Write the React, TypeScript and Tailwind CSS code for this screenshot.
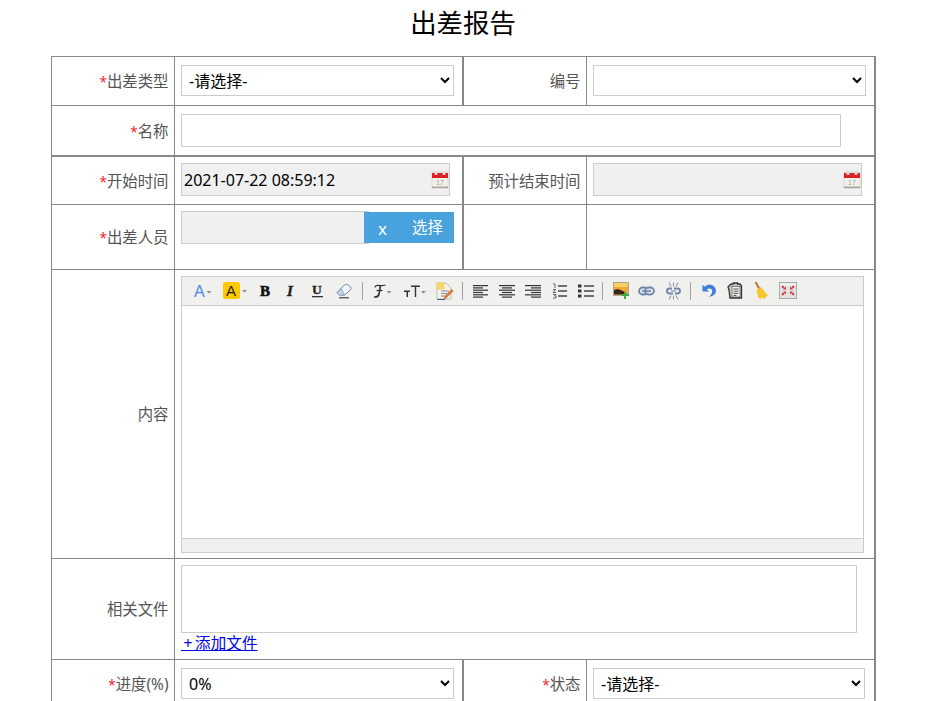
import React from 'react';

const font = { fontFamily: '"Noto Sans","Noto Sans CJK SC",sans-serif' };

const Label = ({ text, star, thick }: { text: string; star?: boolean; thick?: boolean }) => (
  <td className={`border ${thick ? 'border-t-2' : ''} border-[#888] pr-[5.5px] pt-[2px] text-right align-middle text-[15.4px] text-[#555]`}>
    {star && <span className="text-[13.5px] text-[#f5222d]">*</span>}
    {text}
  </td>
);

const Calendar = () => (
  <svg width="18" height="19" viewBox="0 0 18 19" className="shrink-0">
    <rect x="1" y="2" width="16" height="16" fill="#f4f1ea" stroke="#cfcabf" strokeWidth="0.6" />
    <rect x="1" y="3" width="16" height="5" fill="#dd1f26" />
    <rect x="3.5" y="1" width="3" height="4" rx="1" fill="#d9d9d9" />
    <rect x="11.5" y="1" width="3" height="4" rx="1" fill="#d9d9d9" />
    <rect x="1" y="16.5" width="16" height="1.6" fill="#a8a59c" />
    <text x="5" y="15" fontSize="7" fill="#9a9a9a" fontFamily="Liberation Sans">17</text>
  </svg>
);

const DateBox = ({ value }: { value?: string }) => (
  <div className="flex h-[33px] w-[269px] items-center justify-between border border-[#ccc] bg-[#f0f0f0] pl-[2px] text-[16px] text-black">
    <span className="pt-[2px]">{value}</span>
    <span className="flex"><Calendar /></span>
  </div>
);

const Select = ({ value, width }: { value: string; width: string }) => (
  <select
    defaultValue={value}
    className={`${width} block h-[31px] border border-[#ccc] bg-white pl-[3px] pt-[2px] text-[16px] text-black`}
  >
    <option value={value}>{value}</option>
  </select>
);

const Sep = ({ cls }: { cls: string }) => <div className={`${cls} h-[18px] w-px shrink-0 bg-[#a0a0a0]`} />;

const Caret = ({ x, y = 9 }: { x: number; y?: number }) => (
  <path d={`M${x} ${y}h5l-2.5 2.5z`} fill="#8a8a8a" />
);

const Lines = ({ rows }: { rows: [number, number][] }) => (
  <>
    {rows.map(([x, w], i) => (
      <rect key={i} x={x} y={1 + i * 2.3} width={w} height="1.2" fill="#333" />
    ))}
  </>
);

const Toolbar = () => (
  <div className="flex h-[29px] shrink-0 items-center border-b border-[#ccc] bg-[#f0f0ee]">
    <svg width="18" height="16" viewBox="0 0 18 16" className="ml-[12px] shrink-0">
      <text x="0" y="14" fontSize="16" fill="#4a86e8" fontFamily="Liberation Sans">A</text>
      <Caret x={12.5} y={8} />
    </svg>
    <svg width="24" height="17" viewBox="0 0 24 17" className="ml-[11px] shrink-0">
      <rect width="17" height="17" rx="2.5" fill="#ffc800" />
      <text x="3" y="14" fontSize="15" fill="#222" fontFamily="Liberation Sans">A</text>
      <Caret x={19} y={8} />
    </svg>
    <svg width="12" height="14" viewBox="0 0 12 14" className="ml-[12px] shrink-0">
      <text x="1" y="12" fontSize="15" fontWeight="700" fill="#111" stroke="#111" strokeWidth="0.6" fontFamily="Liberation Serif">B</text>
    </svg>
    <svg width="10" height="14" viewBox="0 0 10 14" className="ml-[15px] shrink-0">
      <text x="1" y="12" fontSize="15" fontWeight="700" fontStyle="italic" fill="#222" stroke="#222" strokeWidth="0.4" fontFamily="Liberation Serif">I</text>
    </svg>
    <svg width="11" height="15" viewBox="0 0 11 15" className="ml-[16px] shrink-0">
      <text x="0" y="11" fontSize="13.500" fontWeight="700" fill="#222" stroke="#222" strokeWidth="0.3" fontFamily="Liberation Serif">U</text>
      <rect y="13" width="11" height="1.3" fill="#333" />
    </svg>
    <svg width="16" height="16" viewBox="0 0 16 16" className="ml-[13px] shrink-0">
      <path d="M1 9.500 8.500 2q1.800-1.500 3.500 0l2.500 2q1.200 1.500 0 2.800L8.500 12H3.500z" fill="#f2f5f9" stroke="#6f86a6" />
      <path d="M1 9.500 3.500 12h5L5.500 6z" fill="#c6d5e8" stroke="#6f86a6" strokeWidth="0.6" />
      <path d="M3 14.800h10" stroke="#444" strokeWidth="1.200" />
    </svg>
    <Sep cls="ml-[10px]" />
    <svg width="20" height="16" viewBox="0 0 20 16" className="ml-[9px] shrink-0">
      <path d="M3 4.500Q3 2 7 2.500q3 .6 6.500-.5" fill="none" stroke="#333" strokeWidth="1.300" />
      <path d="M8.500 2.500 7 11q-.6 3.500-5 3" fill="none" stroke="#333" strokeWidth="1.600" />
      <path d="M4.500 7.500h6" stroke="#333" strokeWidth="1.200" />
      <Caret x={14.5} y={8} />
    </svg>
    <svg width="22" height="16" viewBox="0 0 22 16" className="ml-[12px] shrink-0">
      <path d="M0 7.500h6v1.500H4v5H2.500V9H0z" fill="#333" />
      <path d="M7 2.500h9v1.400h-3.800V14h-1.400V3.900H7z" fill="#333" />
      <Caret x={17} y={8} />
    </svg>
    <svg width="18" height="18" viewBox="0 0 18 18" className="ml-[10px] shrink-0">
      <path d="M1 1h9l5 5v11H1z" fill="#f6f4ea" stroke="#a6a6a0" strokeWidth="0.7" />
      <rect x="0.500" y="0.500" width="8" height="7" fill="#f6d566" />
      <path d="M5 9h8M5 11.500h6M5 14h4" stroke="#7d8aa0" />
      <path d="M8 15 15.500 7 17.500 9 10 16.500 7.500 17z" fill="#d9773a" />
      <rect x="1" y="17" width="8" height="1" fill="#4a5a80" />
    </svg>
    <Sep cls="ml-[8px]" />
    <svg width="15" height="14" viewBox="0 0 15 14" className="ml-[10px] shrink-0">
      <Lines rows={[[0, 15], [0, 10], [0, 15], [0, 10], [0, 15], [0, 10]]} />
    </svg>
    <svg width="16" height="14" viewBox="0 0 16 14" className="ml-[11px] shrink-0">
      <Lines rows={[[0, 16], [3, 10], [0, 16], [3, 10], [0, 16], [3, 10]]} />
    </svg>
    <svg width="16" height="14" viewBox="0 0 16 14" className="ml-[10px] shrink-0">
      <Lines rows={[[0, 16], [6, 10], [0, 16], [6, 10], [0, 16], [6, 10]]} />
    </svg>
    <svg width="15" height="16" viewBox="0 0 15 16" className="ml-[11px] shrink-0">
      <path d="M1 1h2v4M1 6.500h2.500l-2.500 3h3M1 11.500h3l-1.500 1.500h1.500v2H1" fill="none" stroke="#555" strokeWidth="0.9" />
      <path d="M6 3h9M6 8h9M6 13h9" stroke="#444" strokeWidth="1.300" />
    </svg>
    <svg width="16" height="16" viewBox="0 0 16 16" className="ml-[11px] shrink-0">
      <path d="M0 1.500h3.500v3H0zM0 6.500h3.500v3H0zM0 11.500h3.500v3H0z" fill="#333" />
      <path d="M6 3h10M6 8h10M6 13h10" stroke="#444" strokeWidth="1.300" />
    </svg>
    <Sep cls="ml-[8px]" />
    <svg width="16" height="17" viewBox="0 0 16 17" className="ml-[10px] shrink-0">
      <rect x="0.300" y="0.300" width="15" height="13" fill="#f2a93c" stroke="#8b8b8b" strokeWidth="0.600" />
      <rect x="1" y="1" width="13.500" height="4" fill="#f7cf62" />
      <path d="M1 12.500V8l4-1 5 2 4.500 3.500z" fill="#33251a" />
      <path d="M11 9.500h2v2.500h3v2h-3v3h-2v-3H8.500v-2H11z" fill="#3fa84a" />
    </svg>
    <svg width="17" height="10" viewBox="0 0 17 10" className="ml-[9px] shrink-0">
      <rect x="1" y="1.500" width="9" height="7" rx="3.500" fill="#dfe6ef" stroke="#6d86a8" strokeWidth="1.800" />
      <rect x="7" y="1.500" width="9" height="7" rx="3.500" fill="#dfe6ef" stroke="#6d86a8" strokeWidth="1.800" />
      <rect x="4" y="4.200" width="9" height="1.600" fill="#6d86a8" />
    </svg>
    <svg width="17" height="18" viewBox="0 0 17 18" className="ml-[10px] shrink-0">
      <path d="M7 6.500H4.500a2.500 2.500 0 0 0 0 5H8M9 6.500h3.500a2.500 2.500 0 0 1 0 5H10" fill="none" stroke="#6d86a8" strokeWidth="1.800" />
      <path d="M6 9h5" stroke="#8da0ba" strokeWidth="1.400" />
      <path d="M4 .5l2 4M8.500 .5v4M13 .5l-2 4M4 17.500l2-4M8.500 17.500v-4M13 17.500l-2-4" stroke="#7f92ac" />
    </svg>
    <Sep cls="ml-[8px]" />
    <svg width="14" height="14" viewBox="0 0 14 14" className="ml-[11px] shrink-0">
      <path d="M.5 1v6.500h6.500L4.700 5.200Q8 3.500 9.800 5.500 11.500 8.500 7 13 14 11.500 14 6.500 13 .5 7 .5 4.500 1 3 2.800z" fill="#3f7fd6" />
    </svg>
    <svg width="16" height="17" viewBox="0 0 16 17" className="ml-[11px] shrink-0">
      <path d="M1 5 4 2h2.500V1h4v1H13l1.500 2v12H3L2 8z" fill="#c8c8c2" stroke="#333" strokeWidth="1.300" />
      <rect x="5" y="4.500" width="8" height="10.500" fill="#f1f1ec" stroke="#444" strokeWidth="0.600" />
      <path d="M6.500 7h5M6.500 9.200h5M6.500 11.400h5M6.500 13.500h3" stroke="#444" strokeWidth="0.900" />
    </svg>
    <svg width="14" height="18" viewBox="0 0 14 18" className="ml-[11px] shrink-0">
      <path d="M1.500 0 5.500 7" stroke="#b9772c" strokeWidth="2" />
      <path d="M2.500 8 7 5 8.500 7 14 13.500 9.500 17 7.500 15 6.500 17.500 4 15z" fill="#f4c62e" />
    </svg>
    <svg width="18" height="17" viewBox="0 0 18 17" className="ml-[11px] shrink-0">
      <rect x="0.500" y="0.500" width="17" height="16" fill="#e2e2e2" stroke="#a8a8a8" />
      <rect x="1.500" y="1.500" width="15" height="2" fill="#f4f4f4" />
      <path d="M3 4 5 6M15 4 13 6M3 13 5 11M15 13 13 11" stroke="#d83a3a" strokeWidth="1.800" />
      <path d="M7 4.500V7.500H4zM11 4.500V7.500H14zM7 12.500V9.500H4zM11 12.500V9.500H14z" fill="#d83a3a" />
    </svg>
  </div>
);

export default function App() {
  return (
    <div className="h-screen w-[926px] overflow-hidden bg-white" style={font}>
      <h1 className="h-[56px] pt-[3px] text-center text-[26.4px] leading-[40px] text-black">出差报告</h1>
      <table className="ml-[51px] w-[823px] table-fixed border-collapse border-r-2 border-[#888]">
        <colgroup>
          <col className="w-[123px]" />
          <col className="w-[288px]" />
          <col className="w-[124px]" />
          <col className="w-[288px]" />
        </colgroup>
        <tbody>
          <tr className="h-[49px]">
            <Label text="出差类型" star />
            <td className="border border-r-2 border-[#888] pl-[6px] pb-[2px]">
              <Select value="-请选择-" width="w-[273px]" />
            </td>
            <Label text="编号" />
            <td className="border border-[#888] pl-[6px] pb-[2px]">
              <Select value="" width="w-[273px]" />
            </td>
          </tr>
          <tr className="h-[50px]">
            <Label text="名称" star />
            <td colSpan={3} className="border border-[#888] pl-[6px]">
              <div className="h-[33px] w-[660px] border border-[#ccc] bg-white" />
            </td>
          </tr>
          <tr className="h-[49px]">
            <Label text="开始时间" star thick />
            <td className="border border-t-2 border-r-2 border-[#888] pl-[6px] pb-[2px]">
              <DateBox value="2021-07-22 08:59:12" />
            </td>
            <Label text="预计结束时间" thick />
            <td className="border border-t-2 border-[#888] pl-[6px] pb-[2px]">
              <DateBox />
            </td>
          </tr>
          <tr className="h-[65px]">
            <Label text="出差人员" star />
            <td className="border border-r-2 border-[#888] pl-[6px] pb-[20px] align-middle">
              <div className="flex items-center">
                <div className="h-[33px] w-[188px] shrink-0 border border-[#ccc] bg-[#f0f0f0]" />
                <div className="-ml-[5px] flex h-[31px] w-[90px] shrink-0 items-center bg-[#3f9edc] pt-[2px] opacity-95 text-[15.4px] text-white">
                  <span className="ml-[14px] w-[34px] text-[17px] leading-none">x</span>
                  <span>选择</span>
                </div>
              </div>
            </td>
            <td className="border border-[#888]" />
            <td className="border border-[#888]" />
          </tr>
          <tr className="h-[289px]">
            <Label text="内容" />
            <td colSpan={3} className="border border-[#888] pl-[6px] align-middle">
              <div className="flex h-[277px] w-[683px] flex-col border border-[#ccc]">
                <Toolbar />
                <div className="flex-1 bg-white" />
                <div className="h-[14px] border-t border-[#ccc] bg-[#f0f0ee]" />
              </div>
            </td>
          </tr>
          <tr className="h-[101px]">
            <Label text="相关文件" />
            <td colSpan={3} className="border border-[#888] pl-[6px] align-top pt-[6px]">
              <div className="h-[68px] w-[676px] border border-[#ccc]" />
              <a href="#" className="block w-fit text-[15.6px] leading-[21px] text-[#0000ee] underline">{'\u2009+\u2009添加文件'}</a>
            </td>
          </tr>
          <tr className="h-[49px]">
            <Label text="进度(%)" star />
            <td className="border border-r-2 border-[#888] pl-[6px] pb-[2px]">
              <Select value="0%" width="w-[273px]" />
            </td>
            <Label text="状态" star />
            <td className="border border-[#888] pl-[6px] pb-[2px]">
              <Select value="-请选择-" width="w-[272px]" />
            </td>
          </tr>
        </tbody>
      </table>
    </div>
  );
}
